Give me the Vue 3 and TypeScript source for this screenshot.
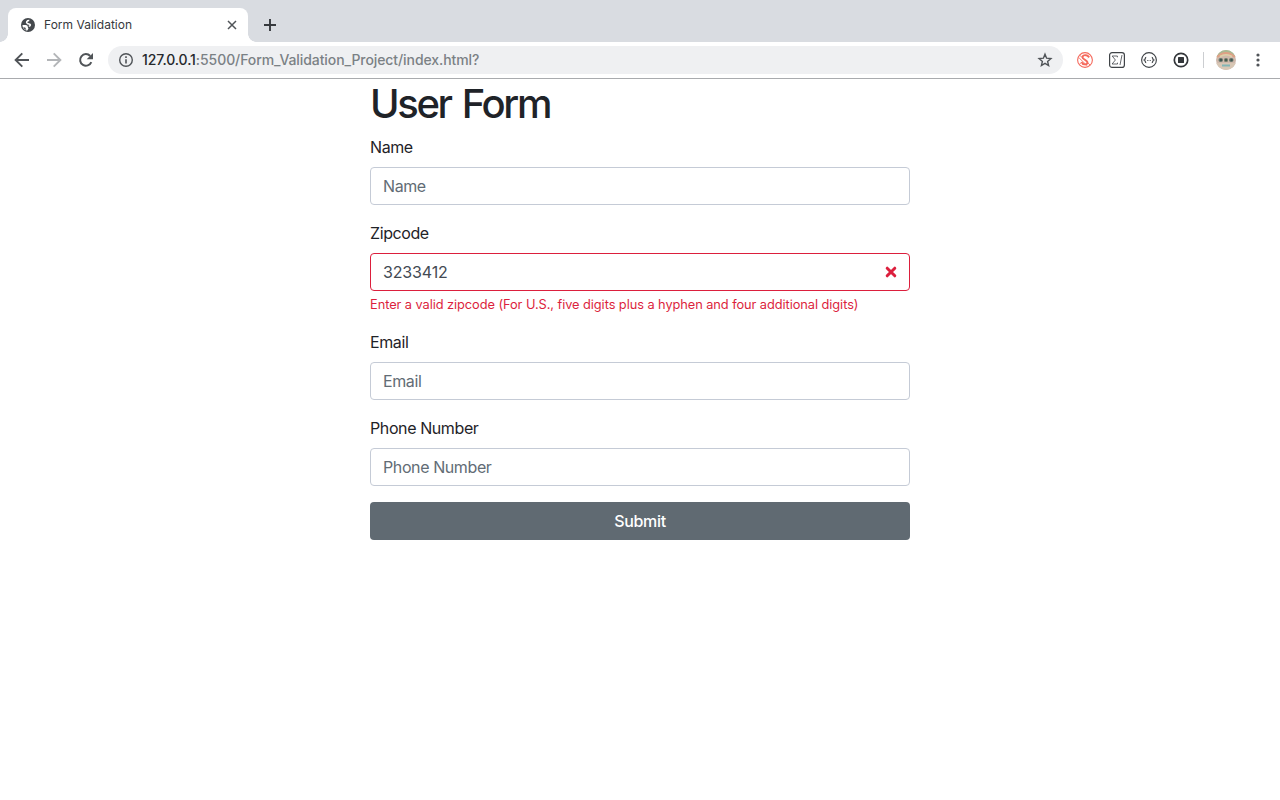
<script setup lang="ts">
import { ref } from 'vue'

interface Field {
  id: string
  label: string
  value: string
  error?: string
}

const fields = ref<Field[]>([
  { id: 'name', label: 'Name', value: '' },
  {
    id: 'zipcode',
    label: 'Zipcode',
    value: '3233412',
    error: 'Enter a valid zipcode (For U.S., five digits plus a hyphen and four additional digits)',
  },
  { id: 'email', label: 'Email', value: '' },
  { id: 'phone', label: 'Phone Number', value: '' },
])
</script>

<template>
  <div class="window">
    <header class="tabstrip">
      <div class="tab">
        <svg class="globe" width="14" height="14" viewBox="0 0 14 14">
          <circle cx="7" cy="7" r="7" fill="#45494d" />
          <path d="M8.300 2.500C5.600 2.400 4.900 4.400 6.300 5.400c1.100.8 2.900.4 3.100 1.500.1.900-.8 1.200-1.600 1.300" fill="none" stroke="#fff" stroke-width="1.500" />
          <path d="M1.500 6.900h3.200c1.300 0 2.100.8 2.100 1.900 0 .9.600 1 .6 1.700 0 .8-1 1-1 2C3.500 12.200 1.300 9.800 1.500 6.900z" fill="#fff" />
          <path d="M2.200 9.200l2 .3 1.200 2.400C3.900 11.600 2.800 10.600 2.200 9.200z" fill="#45494d" />
        </svg>
        <span class="tab-title">Form Validation</span>
        <svg class="tab-close" width="10" height="10" viewBox="0 0 10 10">
          <path d="M1 1l8 8M9 1L1 9" stroke="#505458" stroke-width="1.500" fill="none" />
        </svg>
      </div>
      <svg class="new-tab" width="12" height="12" viewBox="0 0 12 12">
        <path d="M6 0v12M0 6h12" stroke="#36393d" stroke-width="1.900" fill="none" />
      </svg>
    </header>

    <nav class="toolbar">
      <svg class="back" width="16" height="16" viewBox="0 0 16 16" fill="none" stroke="#505458" stroke-width="1.900">
        <path d="M15 8H2M8.300 1.300L1.600 8l6.700 6.700" />
      </svg>
      <svg class="forward" width="16" height="16" viewBox="0 0 16 16" fill="none" stroke="#b3b5b8" stroke-width="1.900">
        <path d="M1 8h13M7.700 1.300L14.400 8l-6.700 6.700" />
      </svg>
      <svg class="reload" width="16" height="16" viewBox="0 0 16 16">
        <path d="M13.300 10.100A5.800 5.800 0 1 1 12.200 4" fill="none" stroke="#505458" stroke-width="2" />
        <path d="M15 .9v6.300H8.700z" fill="#505458" />
      </svg>
      <div class="omnibox">
        <svg class="info" width="14" height="14" viewBox="0 0 14 14">
          <circle cx="7" cy="7" r="6.300" fill="none" stroke="#505458" stroke-width="1.400" />
          <path d="M7 6.200v4.300M7 3.300v1.600" stroke="#505458" stroke-width="1.600" />
        </svg>
        <span class="url"><span class="host">127.0.0.1</span>:5500/Form_Validation_Project/index.html?</span>
        <svg class="star" width="16" height="16" viewBox="0 0 16 16">
          <path d="M8 2.200l1.600 4 4.300.3-3.300 2.900 1 4.200L8 11.400l-3.600 2.200 1-4.200-3.300-2.900 4.300-.3z" fill="none" stroke="#505458" stroke-width="1.400" />
        </svg>
      </div>
      <div class="extensions">
        <svg width="16" height="16" viewBox="0 0 16 16" fill="none" stroke="#f5695c">
          <circle cx="8" cy="8" r="7.400" stroke-width="1.100" />
          <path d="M11.500 5.200C11.200 2.800 6 2.300 5.500 5c-.4 2.600 5.500 3 5 5.800-.5 2.400-5 2.100-5.700-.6" stroke-width="1.900" />
          <path d="M3 3.500l10 9.500M2.200 6l8.200 8M12.900 4.300L11 6.200M2.500 12l2.500-2" stroke-width=".9" />
        </svg>
        <svg width="16" height="16" viewBox="0 0 16 16" fill="none" stroke="#3f4347">
          <rect x=".6" y=".6" width="14.800" height="14.800" rx="2.500" stroke-width="1.200" />
          <path d="M8.400 5.300V4H3.200l3.200 4-3.300 4h5.400v-1.300M13 3l-2 10" stroke-width=".8" />
        </svg>
        <svg width="16" height="16" viewBox="0 0 16 16" fill="none" stroke="#3f4347">
          <circle cx="8" cy="8" r="7.400" stroke-width="1.100" />
          <path d="M5.200 5.300c-1.500 0-.5 2.200-1.900 2.700 1.400.5.400 2.700 1.900 2.700M10.800 5.300c1.500 0 .5 2.200 1.900 2.700-1.400.5-.4 2.700-1.900 2.700" stroke-width="1.200" />
          <path d="M6 8.500h4" stroke-width=".8" stroke-dasharray=".9 .6" />
        </svg>
        <svg width="16" height="16" viewBox="0 0 16 16">
          <circle cx="8" cy="8" r="6.700" fill="none" stroke="#323539" stroke-width="1.700" />
          <rect x="5" y="5" width="6" height="6" rx=".6" fill="#323539" />
        </svg>
      </div>
      <i class="divider"></i>
      <svg class="avatar" width="20" height="20" viewBox="0 0 20 20">
        <defs>
          <clipPath id="face"><circle cx="10" cy="10" r="10" /></clipPath>
        </defs>
        <g clip-path="url(#face)">
          <rect width="20" height="20" fill="#cfb9ac" />
          <path d="M0 0h20v7Q10-1 0 7z" fill="#a8ba93" />
          <path d="M1 7Q10-1 19 7" stroke="#dfa085" stroke-width="2" fill="none" />
          <path d="M4 6.500Q10 3 16 6.500" stroke="#ddd0a8" stroke-width="1.500" fill="none" />
          <path d="M0 13h20v7H0z" fill="#d8c7b5" />
          <path d="M0 14l5 6H0zM20 14l-5 6h5z" fill="#80a878" />
          <path d="M6 15.500h8" stroke="#82b5b5" stroke-width="1.800" />
          <rect x="2.500" y="8" width="4.500" height="4" rx="2" fill="#66776d" />
          <rect x="8" y="8" width="4" height="4" rx="1.500" fill="#78806c" />
          <rect x="13" y="8" width="4.500" height="4" rx="2" fill="#66776d" />
          <path d="M4 10h2M9 10h2M14.500 10h2" stroke="#354c48" stroke-width="1.500" />
        </g>
      </svg>
      <svg class="menu" width="4" height="14" viewBox="0 0 4 14" fill="#505458">
        <circle cx="2" cy="2" r="1.600" />
        <circle cx="2" cy="7" r="1.600" />
        <circle cx="2" cy="12" r="1.600" />
      </svg>
    </nav>

    <main class="container">
      <h1>User Form</h1>
      <form novalidate @submit.prevent>
        <div v-for="field in fields" :key="field.id" class="group">
          <label :for="field.id">{{ field.label }}</label>
          <div class="control">
            <input
              :id="field.id"
              v-model="field.value"
              type="text"
              :placeholder="field.label"
              :class="{ invalid: field.error }"
            />
            <svg v-if="field.error" class="cross" width="12" height="12" viewBox="0 0 12 12">
              <path d="M2.200 2.200l7.600 7.600M9.800 2.200L2.200 9.800" stroke="#dc1f3d" stroke-width="3" stroke-linecap="round" />
            </svg>
          </div>
          <div v-if="field.error" class="feedback">{{ field.error }}</div>
        </div>
        <button type="submit">Submit</button>
      </form>
    </main>
  </div>
</template>

<style>
body {
  margin: 0;
  background: #fff;
}
</style>

<style scoped>
* {
  box-sizing: border-box;
}
.window {
  height: 800px;
  overflow: hidden;
  background: #fff;
  font-family: Inter, Roboto, sans-serif;
  color: #1f2328;
}
svg {
  display: block;
  flex: none;
}
.tabstrip {
  display: flex;
  height: 42px;
  padding: 8px 0 0 8px;
  background: #d9dce1;
}
.tab {
  position: relative;
  display: flex;
  align-items: center;
  width: 240px;
  height: 34px;
  padding: 0 11px 0 13px;
  border-radius: 8px 8px 0 0;
  background: #fff;
}
.tab::before,
.tab::after {
  content: '';
  position: absolute;
  bottom: 0;
  width: 8px;
  height: 8px;
}
.tab::before {
  left: -8px;
  background: radial-gradient(circle at 0 0, transparent 7.500px, #fff 8px);
}
.tab::after {
  right: -8px;
  background: radial-gradient(circle at 100% 0, transparent 7.500px, #fff 8px);
}
.tab-title {
  flex: 1;
  margin-left: 9px;
  font-size: 12px;
  line-height: 16px;
  letter-spacing: 0.020px;
  color: #36393d;
}
.new-tab {
  margin: 11px 0 0 16px;
}
.toolbar {
  display: flex;
  align-items: center;
  height: 37px;
  padding-left: 14px;
  border-bottom: 1px solid #a9abae;
}
.forward {
  margin-left: 16px;
}
.reload {
  margin-left: 16px;
}
.omnibox {
  display: flex;
  align-items: center;
  width: 955px;
  height: 28px;
  margin-left: 14px;
  padding: 0 10px 0 11px;
  border-radius: 14px;
  background: #eff0f2;
}
.url {
  flex: 1;
  margin-left: 9px;
  font-size: 14px;
  font-weight: 500;
  line-height: 20px;
  letter-spacing: -0.080px;
  white-space: nowrap;
  color: #7b8185;
}
.host {
  color: #25282c;
}
.extensions {
  display: flex;
  gap: 16px;
  margin-left: 14px;
}
.divider {
  width: 1px;
  height: 16px;
  margin-left: 14px;
  background: #ccced1;
}
.avatar {
  margin-left: 12px;
}
.menu {
  margin-left: 20px;
}
.container {
  width: 540px;
  margin: 0 auto;
}
h1 {
  margin: 0;
  padding-top: 1px;
  height: 56px;
  font-size: 40px;
  font-weight: 550;
  line-height: 48px;
  letter-spacing: -2.350px;
  word-spacing: 2.700px;
}
.group {
  margin-bottom: 16px;
}
label {
  display: block;
  width: max-content;
  margin-bottom: 8px;
  font-size: 16px;
  line-height: 24px;
  letter-spacing: -0.400px;
}
.control {
  position: relative;
}
input {
  display: block;
  width: 100%;
  height: 38px;
  padding: 6px 12px;
  border: 1px solid #c5cbd6;
  border-radius: 4px;
  outline: 0;
  background: #fff;
  font: 16px/24px Inter, Roboto, sans-serif;
  letter-spacing: -0.150px;
  color: #434a53;
}
input::placeholder {
  color: #626c75;
  letter-spacing: -0.400px;
  opacity: 1;
}
input.invalid {
  border-color: #dc1f3d;
}
.cross {
  position: absolute;
  top: 13px;
  right: 13px;
}
.feedback {
  margin-top: 4px;
  font-size: 12.800px;
  line-height: 19.200px;
  letter-spacing: -0.063px;
  white-space: nowrap;
  color: #dc1f3d;
}
button {
  display: block;
  width: 100%;
  height: 38px;
  padding: 0;
  border: 0;
  border-radius: 4px;
  background: #606a72;
  font: 500 16px/24px Inter, Roboto, sans-serif;
  letter-spacing: -0.320px;
  color: #fff;
}
</style>
